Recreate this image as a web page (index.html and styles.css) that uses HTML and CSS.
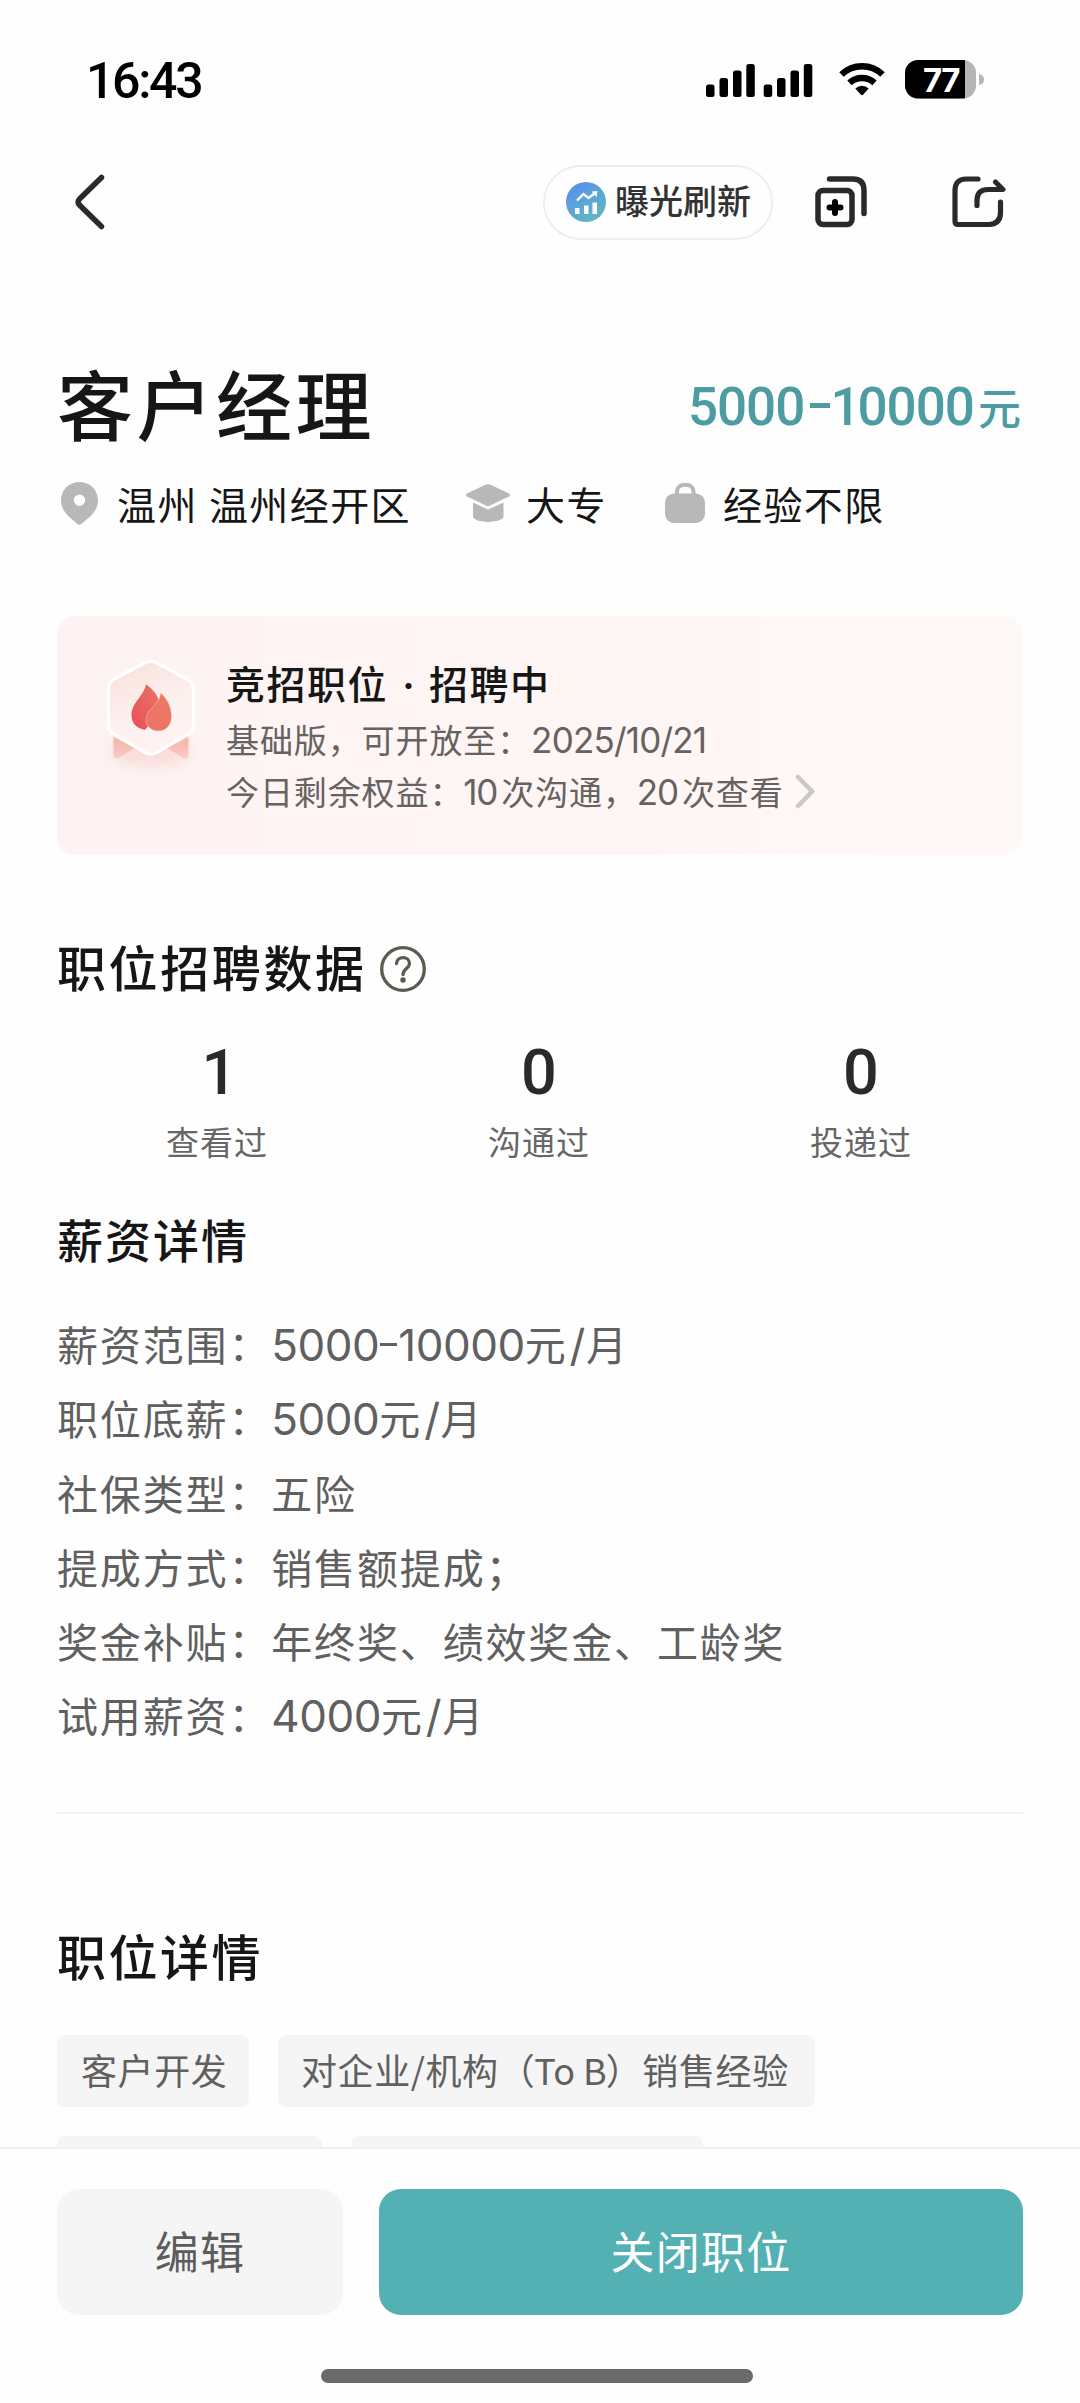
FILE: index.html
```html
<!DOCTYPE html>
<html lang="zh-CN">
<head>
<meta charset="utf-8">
<title>客户经理</title>
<link rel="stylesheet" href="styles.css">
</head>
<body>
<div class="screen">
  <div class="scroll">
    <header class="status">
      <span class="clock">16:43</span>
      <div class="status-icons">
        <svg class="signal" width="107" height="33" viewBox="0 0 107 33"><g fill="#000"><rect x="0" y="20.500" width="8.500" height="12.500" rx="2.500"/><rect x="13.500" y="14" width="8.500" height="19" rx="2.500"/><rect x="27" y="6.500" width="8.500" height="26.500" rx="2.500"/><rect x="40.300" y="0" width="8.500" height="33" rx="2.500"/><rect x="57.700" y="20.500" width="8.500" height="12.500" rx="2.500"/><rect x="71" y="14" width="8.500" height="19" rx="2.500"/><rect x="84.500" y="6.500" width="8.500" height="26.500" rx="2.500"/><rect x="97.800" y="0" width="8.500" height="33" rx="2.500"/></g></svg>
        <svg class="wifi" width="46" height="34" viewBox="0 0 46 34"><g fill="none" stroke="#000" stroke-width="6.500"><path d="M2.500 12.500C14 1.500 32 1.500 43.500 12.500"/><path d="M10.500 20.800C17.500 14.300 28.500 14.300 35.500 20.800"/></g><path d="M16.300 26.500Q23 21 29.700 26.500L24 32.800Q23 33.700 22 32.800Z"/></svg>
        <svg class="battery" width="80" height="39" viewBox="0 0 80 39"><defs><clipPath id="b"><rect width="71" height="38.500" rx="13"/></clipPath></defs><g clip-path="url(#b)"><rect width="71" height="39" fill="#b5b5b5"/><rect width="60" height="39"/></g><path d="M74 14Q79 15 79 19.500T74 25Z" fill="#b5b5b5"/><text x="36" y="31.500" text-anchor="middle" class="charge">77</text></svg>
      </div>
    </header>
    <nav class="nav">
      <svg width="32" height="56" viewBox="0 0 32 56"><path d="M27.500 3.500L5.500 25Q2.500 28 5.500 31L27.500 52.500" fill="none" stroke="#2a2a2a" stroke-width="5.500" stroke-linecap="round"/></svg>
      <div class="pill">
        <svg width="40" height="40" viewBox="0 0 40 40"><defs><linearGradient id="p" x1=".2" y1="0" x2=".8" y2="1"><stop offset="0" stop-color="#568fee"/><stop offset="1" stop-color="#62bbbd"/></linearGradient></defs><circle cx="20" cy="20" r="20" fill="url(#p)"/><path d="M11 18.500L17.500 12L22.500 16L28.500 11.500" fill="none" stroke="#fff" stroke-width="2.300"/><path d="M25.500 9.500L31.500 9L30.500 15Z" fill="#fff"/><path d="M9 26h4.500v6H9zM18 23.500h4.500V32H18zM26.500 20.500H31V32h-4.500z" fill="#fff"/></svg>
        <span>曝光刷新</span>
      </div>
      <svg class="copy" width="53" height="52" viewBox="0 0 53 52" fill="none" stroke="#2a2a2a" stroke-width="5.500" stroke-linecap="round" stroke-linejoin="round"><rect x="3" y="14.500" width="34" height="34" rx="5"/><path d="M14.500 3H38Q49 3 49 14.500V37.500"/><path d="M20 31.500h0M20 26v11M14.500 31.500h11" stroke="#000" stroke-width="6"/></svg>
      <svg class="share" width="54" height="52" viewBox="0 0 54 52" fill="none" stroke="#2a2a2a" stroke-width="5.200" stroke-linecap="round" stroke-linejoin="round"><path d="M26 3H14Q3 3 3 15V45Q3 48.500 6 48.500H37Q48.500 48 48.500 36.500V26"/><path d="M25 29.500V24Q25 13.500 36 13.500H46"/><path d="M43.500 6L51 13.500H43" stroke-width="5"/></svg>
    </nav>
    <main>
      <div class="hero">
        <h1>客户经理</h1>
        <div class="salary"><span>5000</span><i class="dash"></i><span class="one">1</span><span>0000</span><b>元</b></div>
      </div>
      <div class="meta">
        <svg width="37" height="43" viewBox="0 0 37 43"><path fill-rule="evenodd" d="M18.500 0C8 0 0 8 0 18.500C0 30 10 36 16.500 42Q18.500 43.500 20.500 42C27 36 37 30 37 18.500C37 8 29 0 18.500 0ZM18.500 12.500a5.700 5.700 0 1 1 0 11.400a5.700 5.700 0 1 1 0-11.400Z" fill="#b8b8b8"/></svg>
        <span class="place">温州 温州经开区</span>
        <svg width="44" height="38" viewBox="0 0 44 38"><g fill="#b8b8b8"><path d="M20 .6Q22 0 24 .6L43 9.500Q45 11 43 12.500L24 21.500Q22 22.500 20 21.500L1 12.500Q-1 11 1 9.500Z"/><path d="M7 18.500L22 25.500L37.500 18.500V33C34 39.500 10 39.500 7 33Z"/></g></svg>
        <span class="degree">大专</span>
        <svg width="40" height="40" viewBox="0 0 40 40"><rect x="12" y="2" width="16.500" height="20" rx="6.500" fill="none" stroke="#b8b8b8" stroke-width="4"/><rect y="10.500" width="40" height="29.500" rx="9" fill="#b8b8b8"/></svg>
        <span class="years">经验不限</span>
      </div>
      <section class="card">
        <svg class="medal" width="104" height="126" viewBox="0 0 104 126"><defs><linearGradient id="h" x1="0" y1="0" x2=".4" y2="1"><stop offset="0" stop-color="#f9dfda"/><stop offset=".65" stop-color="#fdf1ef"/><stop offset="1" stop-color="#fef3f2"/></linearGradient><linearGradient id="f1" x1="1" y1="0" x2="0" y2="1"><stop offset="0" stop-color="#e87566"/><stop offset="1" stop-color="#e84e58"/></linearGradient><linearGradient id="f2" x1="0" y1="1" x2=".6" y2="0"><stop offset="0" stop-color="#ed7163"/><stop offset="1" stop-color="#e97b66"/></linearGradient><linearGradient id="r" x1="0" y1="0" x2="0" y2="1"><stop offset="0" stop-color="#f4b3a8"/><stop offset="1" stop-color="#f8cbc4"/></linearGradient><filter id="s" x="-30%" y="-60%" width="160%" height="220%"><feGaussianBlur stdDeviation="7"/></filter></defs>
          <ellipse cx="52" cy="98" rx="41" ry="13" fill="#f3b9b2" opacity=".4" filter="url(#s)"/>
          <path d="M14 81V98Q14 106 21 103L38 93ZM90 81V98Q90 106 83 103L66 93Z" fill="url(#r)" stroke="#fce2de" stroke-width="1.500"/>
          <path d="M46 8Q52 5 58 8L88 24Q94.500 27.500 94.500 34V71Q94.500 76 89 79L58 97.500Q52 101 46 97.500L15 79Q9.500 76 9.500 71V34Q9.500 27.500 15 24Z" fill="url(#h)" stroke="#fff" stroke-width="3.200"/>
          <path d="M47 29C45 41 33 47 32.500 60C32.500 68 37 73 46 75C54 66 60 55 60 48C60 40 52 33 47 29Z" fill="url(#f1)"/>
          <path d="M61.500 38C61 50 47 54 47 65C47 71 52 76 59.500 76C67 76 72.500 70 72.500 61.500C72.500 51 67 42 61.500 38Z" fill="url(#f2)" stroke="#f6cbc4" stroke-width=".5"/>
        </svg>
        <div class="card-text">
          <h3>竞招职位<em>·</em>招聘中</h3>
          <p>基础版，可开放至：<span class="num date">2025/10/21</span></p>
          <p>今日剩余权益：<span class="num ten">10</span>次沟通，<span class="num twenty">20</span>次查看<svg class="more" width="20" height="35" viewBox="0 0 20 35"><path d="M3 3L17 17.500L3 32" fill="none" stroke="#cbc8c8" stroke-width="4.500" stroke-linecap="round"/></svg></p>
        </div>
      </section>
      <h2 class="data-title">职位招聘数据<svg width="46" height="46" viewBox="0 0 46 46"><g fill="none" stroke="#5c594f" stroke-width="3.300"><circle cx="23" cy="23" r="21.300"/><path d="M16.500 17.500C17 9.500 29.500 10 29.500 17.500C29.500 22.500 23 22.500 23 28.500" stroke-linecap="round"/></g><circle cx="23" cy="34" r="2.700" fill="#5c594f"/></svg></h2>
      <div class="stats">
        <div><strong class="single">1</strong><small>查看过</small></div>
        <div><strong>0</strong><small>沟通过</small></div>
        <div><strong>0</strong><small>投递过</small></div>
      </div>
      <h2 class="pay-title">薪资详情</h2>
      <div class="rows">
        <p>薪资范围：<span class="num">5000</span><i class="thin-dash"></i><span class="num">10000</span>元<span class="num slash">/</span>月</p>
        <p>职位底薪：<span class="num">5000</span>元<span class="num slash">/</span>月</p>
        <p>社保类型：五险</p>
        <p>提成方式：销售额提成；</p>
        <p>奖金补贴：年终奖、绩效奖金、工龄奖</p>
        <p>试用薪资：<span class="num">4000</span>元<span class="num slash">/</span>月</p>
      </div>
      <hr>
      <h2 class="job-title">职位详情</h2>
      <div class="tags">
        <span class="tag">客户开发</span><span class="tag wide">对企业/机构（<span class="tob">To B</span>）销售经验</span>
      </div>
      <div class="tags next"><span class="tag stub-a"></span><span class="tag stub-b"></span></div>
    </main>
  </div>
  <footer>
    <div class="actions"><button class="edit">编辑</button><button class="close">关闭职位</button></div>
    <div class="home"></div>
  </footer>
</div>
</body>
</html>
```
FILE: styles.css
```css
* { box-sizing: border-box; }
body { margin: 0; background: #fefefe; color: #161616; font-family: "Noto Sans CJK SC", sans-serif; }
h1, h2, h3, p { margin: 0; font-weight: 500; }
svg { display: block; flex: none; }
.screen { width: 1080px; height: 2403px; display: flex; flex-direction: column; overflow: hidden; }
.scroll { height: 2147px; flex: none; overflow: hidden; }
.status { height: 120px; padding: 40px 95px 0 86px; display: flex; justify-content: space-between; align-items: flex-start; }
.clock { font: 500 50px/82px Roboto, sans-serif; letter-spacing: -2.3px; color: #000; }
.status-icons { display: flex; align-items: flex-start; padding-top: 20px; }
.signal { margin: 4px 26px 0 0; }
.wifi { margin: 2px 20px 0 0; }
.charge { font: 700 33px Inter, sans-serif; fill: #fff; letter-spacing: -1.5px; }
.nav { height: 164px; padding: 0 74px 0 74px; display: flex; align-items: center; }
.pill { width: 230px; height: 75px; margin-left: 437px; border: 2px solid #eee; border-radius: 38px; display: flex; align-items: center; padding-left: 21px; gap: 9px; font-size: 34px; font-weight: 500; line-height: 70px; color: #333; white-space: nowrap; }
.pill span { margin-top: -4px; }
.copy { margin-left: 42px; }
.share { margin-left: 84px; }
main { padding: 0 57px; }
.hero { margin-top: 68px; height: 100px; display: flex; justify-content: space-between; align-items: center; }
h1 { font-size: 76px; line-height: 100px; letter-spacing: 3.5px; }
.salary { display: flex; align-items: baseline; font: 500 53px/100px Roboto, sans-serif; letter-spacing: -1px; color: #4d9ca1; margin: 9px 2px 0 0; }
.dash { width: 20px; height: 5px; background: #4d9ca1; margin: 0 0 0 6px; transform: translateY(-17px); }
.one { margin-right: -2px; }
.salary b { font: 500 43px/1 "Noto Sans CJK SC", sans-serif; letter-spacing: 0; margin-left: 4px; }
.meta { margin-top: 21px; height: 60px; display: flex; align-items: center; font-size: 39px; line-height: 60px; letter-spacing: 1.4px; padding-left: 4px; white-space: pre; }
.meta span { margin-left: 19px; }
.meta .place { width: 329px; word-spacing: 1px; margin-right: 20px; }
.meta .degree { margin-left: 16px; width: 139px; }
.meta .years { margin-left: 18px; }
.card { margin-top: 83px; height: 239px; border-radius: 18px; background: linear-gradient(90deg, #fdf3f3, #fef6f4 60%, #fef9f7); padding: 39px 0 0 42px; display: flex; }
.medal { width: 104px; height: 126px; }
.card-text { margin-left: 23px; white-space: nowrap; }
h3 { font-size: 39px; line-height: 55px; letter-spacing: 1.5px; }
h3 em { display: inline-block; width: 41px; text-align: center; font: 600 39px/1 Inter, sans-serif; letter-spacing: 0; }
.card p { margin-top: 3px; font-size: 33px; line-height: 52px; letter-spacing: .9px; color: #666261; font-weight: 400; display: flex; align-items: baseline; height: 52px; }
.card p + p { margin-top: 0; }
.num { font-family: Inter, sans-serif; line-height: 0; letter-spacing: 0; }
.card .num { font-size: 35px; letter-spacing: -1.2px; }
.card .date { letter-spacing: -0.8px; }
.card .ten, .card .twenty { margin-right: 4px; }
.more { margin-left: 11px; align-self: center; }
.data-title { margin-top: 81px; font-size: 49px; line-height: 60px; letter-spacing: 2.6px; display: flex; align-items: center; }
.data-title svg { margin: 6px 0 0 13px; }
.stats { margin: 45px 1px 0 -1px; display: grid; grid-template-columns: repeat(3, 1fr); text-align: center; }
.stats div { display: flex; flex-direction: column; }
.stats strong { font: 500 63px/64px Roboto, sans-serif; color: #2a2a2a; }
.stats .single { padding-left: 5px; }
.stats small { margin-top: 11px; font-size: 33px; line-height: 50px; letter-spacing: 1px; color: #666; }
.pay-title { margin-top: 42px; font-size: 46px; line-height: 60px; letter-spacing: 2px; }
.rows { margin-top: 38px; font-size: 41px; letter-spacing: 1.85px; color: #606060; }
.rows p { height: 74.3px; line-height: 74.3px; font-weight: 400; white-space: nowrap; }
.rows .num { font-size: 44px; letter-spacing: -.5px; }
.rows .slash { margin: 0 1px 0 2px; }
.thin-dash { display: inline-block; width: 17px; height: 3.500px; margin: 0 1px; background: #606060; vertical-align: 15px; }
hr { margin: 60px 0 0; border: 0; height: 2px; background: #f3f3f3; }
.job-title { margin-top: 111px; font-size: 49px; line-height: 60px; letter-spacing: 2.5px; }
.tags { margin-top: 50px; display: flex; gap: 29px; }
.tag { height: 72px; padding-left: 24px; width: 192px; border-radius: 8px; background: #f5f5f5; font-size: 36px; line-height: 68px; letter-spacing: .6px; color: #606060; white-space: nowrap; }
.wide { width: 537px; padding-left: 23px; }
.tob { margin: 0 -1px 0 -1px; letter-spacing: 0; }
.tags.next { margin-top: 29px; }
.stub-a { width: 265px; }
.stub-b { width: 352px; }
footer { flex: 1; border-top: 2px solid #f0f0f0; background: #fefefe; padding: 40px 57px 0; }
.actions { display: flex; gap: 36px; }
button { border: 0; height: 126px; border-radius: 22px; padding: 0 0 5px; font: 400 44px/1 "Noto Sans CJK SC", sans-serif; letter-spacing: 1.2px; }
.edit { width: 286px; background: #f5f5f5; color: #5c5c5c; }
.close { flex: 1; background: #53b0b3; color: #fff; }
.home { width: 432px; height: 14px; margin: 54px 0 0 264px; border-radius: 7px; background: #6a6a6a; }
```
